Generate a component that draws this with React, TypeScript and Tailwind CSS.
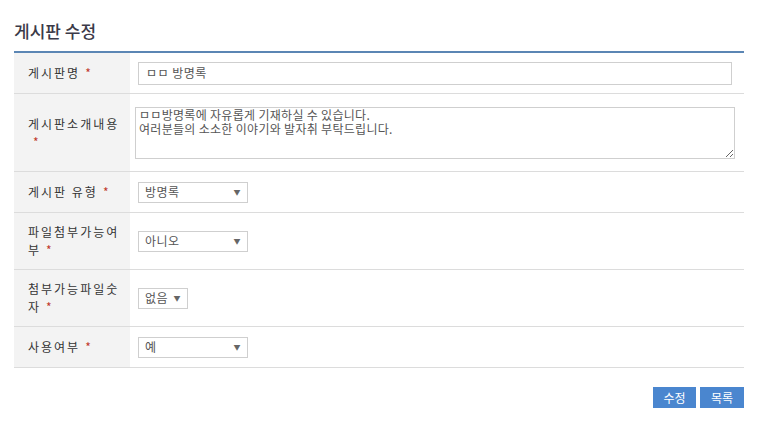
import React from 'react';

const font = { fontFamily: '"Noto Sans CJK KR", "Noto Sans", sans-serif' };

function Req() {
  return <span className="ml-[5px] text-[12px] leading-[18px] text-[#c0392b]">*</span>;
}

function FakeSelect({ value, width }: { value: string; width: string }) {
  return (
    <div
      className={`flex h-[21px] items-center justify-between border border-[#cfcfcf] bg-white pl-[6px] pr-[6px] text-[12px] tracking-[0.5px] text-[#555] ${width}`}
    >
      <span>{value}</span>
      <span className="text-[7px] text-[#666]">▼</span>
    </div>
  );
}

interface Row {
  label: string;
  h: string;
  content: React.ReactNode;
}

export default function App() {
  const rows: Row[] = [
    {
      label: '게시판명',
      h: 'h-[41px]',
      content: (
        <div className="ml-[8px] flex h-[23px] w-[594px] items-center border border-[#cfcfcf] px-[7px] text-[12px] tracking-[0.5px] text-[#555]">
          ㅁㅁ 방명록
        </div>
      ),
    },
    {
      label: '게시판소개내용',
      h: 'h-[78px]',
      content: (
        <textarea
          readOnly
          className="ml-[5px] block h-[52px] w-[600px] resize border border-[#cfcfcf] px-[3px] py-0 text-[12px] leading-[14px] tracking-[0.3px] text-[#555] outline-none"
          defaultValue={'ㅁㅁ방명록에 자유롭게 기재하실 수 있습니다.\n여러분들의 소소한 이야기와 발자취 부탁드립니다.'}
        />
      ),
    },
    {
      label: '게시판 유형',
      h: 'h-[41px]',
      content: <div className="ml-[8px]"><FakeSelect value="방명록" width="w-[110px]" /></div>,
    },
    {
      label: '파일첨부가능여부',
      h: 'h-[57px]',
      content: <div className="ml-[8px]"><FakeSelect value="아니오" width="w-[110px]" /></div>,
    },
    {
      label: '첨부가능파일숫자',
      h: 'h-[57px]',
      content: <div className="ml-[8px]"><FakeSelect value="없음" width="w-[50px]" /></div>,
    },
    {
      label: '사용여부',
      h: 'h-[41px]',
      content: <div className="ml-[8px]"><FakeSelect value="예" width="w-[110px]" /></div>,
    },
  ];

  return (
    <div className="min-h-[431px] w-[774px] bg-white" style={font}>
      <div className="px-[14px] pt-[20px]">
        <h1 className="text-[17px] font-medium leading-[22px] text-[#3b3a48]">게시판 수정</h1>
        <div className="mt-[9px] w-[730px] border-t-2 border-[#5b86b4]">
          {rows.map((r) => (
            <div key={r.label} className={`flex border-b border-[#dcdcdc] ${r.h}`}>
              <div className="flex w-[116px] shrink-0 items-center bg-[#f3f3f3] pl-[14px] pr-[2px]">
                <span className="text-[12px] leading-[18px] tracking-[2px] text-[#333]">
                  {r.label}
                  <Req />
                </span>
              </div>
              <div className="flex flex-1 items-center">{r.content}</div>
            </div>
          ))}
        </div>
        <div className="mt-[19px] flex w-[730px] justify-end gap-[4px]">
          <button className="h-[21px] w-[43px] bg-[#4a86cf] text-[12px] text-white">수정</button>
          <button className="h-[21px] w-[44px] bg-[#4a86cf] text-[12px] text-white">목록</button>
        </div>
      </div>
    </div>
  );
}
